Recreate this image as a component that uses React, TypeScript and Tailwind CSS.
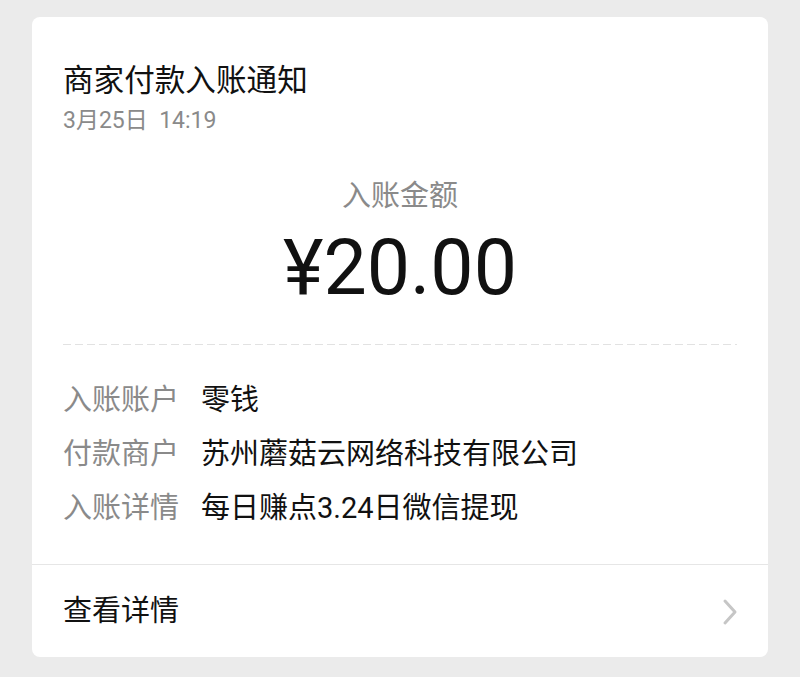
import React from "react";

const font = { fontFamily: "Roboto, 'Noto Sans CJK SC', sans-serif" };

export default function App() {
  return (
    <div className="w-[800px] h-[677px] bg-[#ebebeb] pt-[17px]" style={font}>
      <div className="mx-[32px] w-[736px] bg-white rounded-[8px] overflow-hidden">
        <div className="px-[31px]">
          <div className="pt-[46px] text-[30.6px] leading-[36px] text-[#111]">商家付款入账通知</div>
          <div className="mt-[8px] text-[23px] leading-[28px] text-[#8a8a8a]">3月25日&nbsp;&nbsp;14:19</div>
          <div className="mt-[43px] text-center text-[29px] leading-[36px] text-[#8a8a8a]">入账金额</div>
          <div className="mt-[10px] text-center text-[77px] leading-[88px] text-[#111]">¥20.00</div>
          <div className="mt-[32px] h-px bg-[repeating-linear-gradient(to_right,#e2e2e2_0,#e2e2e2_8px,transparent_8px,transparent_12px)]" />
          <div className="mt-[28px] mb-[29px] flex flex-col text-[29px] leading-[54px]">
            <div className="flex">
              <span className="w-[138px] text-[#8a8a8a]">入账账户</span>
              <span className="text-[#111]">零钱</span>
            </div>
            <div className="flex">
              <span className="w-[138px] text-[#8a8a8a]">付款商户</span>
              <span className="text-[#111]">苏州蘑菇云网络科技有限公司</span>
            </div>
            <div className="flex">
              <span className="w-[138px] text-[#8a8a8a]">入账详情</span>
              <span className="text-[#111]">每日赚点3.24日微信提现</span>
            </div>
          </div>
        </div>
        <div className="h-px bg-[#e6e6e6]" />
        <div className="h-[92px] px-[31px] flex items-center justify-between">
          <span className="text-[29px] leading-[36px] text-[#111]">查看详情</span>
          <svg width="18" height="28" viewBox="0 0 18 28" className="mr-[-2px] mt-[2px]">
            <polyline points="4,3 14,14 4,25" fill="none" stroke="#c6c6c6" strokeWidth="3" strokeLinecap="round" strokeLinejoin="round" />
          </svg>
        </div>
      </div>
    </div>
  );
}
